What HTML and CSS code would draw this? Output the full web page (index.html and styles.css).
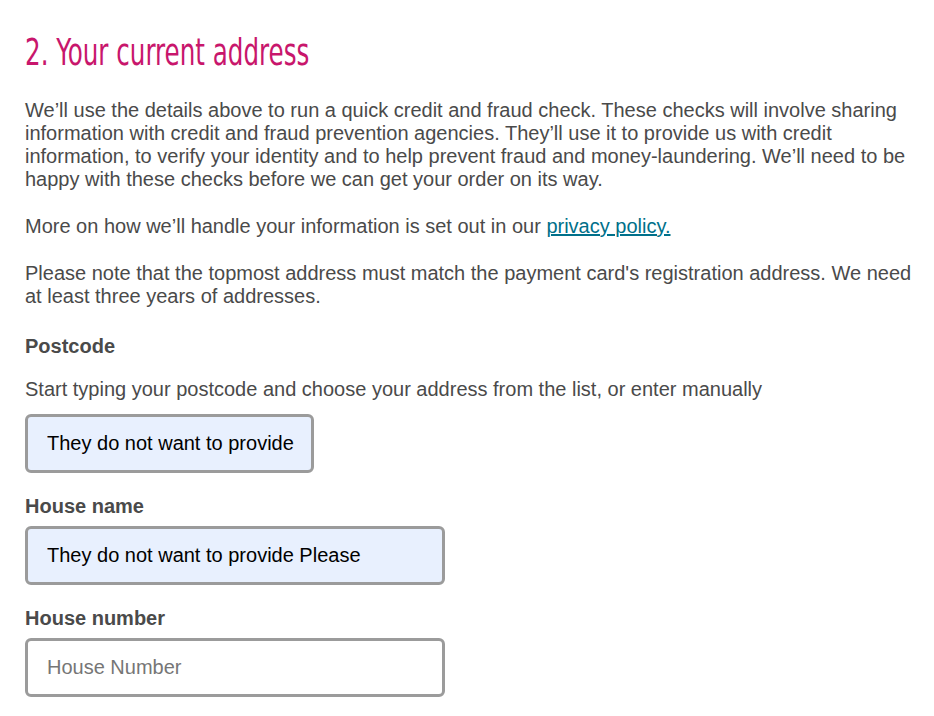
FILE: index.html
```html
<!DOCTYPE html>
<html lang="en">
<head>
<meta charset="utf-8">
<title>Your current address</title>
<link rel="stylesheet" href="styles.css">
</head>
<body>
<main class="section">
  <h2 class="section-title"><span class="section-title__text">2. Your current address</span></h2>
  <p class="copy">We’ll use the details above to run a quick credit and fraud check. These checks will involve sharing information with credit and fraud prevention agencies. They’ll use it to provide us with credit information, to verify your identity and to help prevent fraud and money-laundering. We’ll need to be happy with these checks before we can get your order on its way.</p>
  <p class="copy">More on how we’ll handle your information is set out in our <a class="link" href="#">privacy policy.</a></p>
  <p class="copy">Please note that the topmost address must match the payment card's registration address. We need at least three years of addresses.</p>

  <div class="fields">
    <div class="field">
      <label class="label" for="postcode">Postcode</label>
      <p class="hint">Start typing your postcode and choose your address from the list, or enter manually</p>
      <input class="input input--short input--filled" id="postcode" type="text" value="They do not want to provide">
    </div>

    <div class="field">
      <label class="label" for="housename">House name</label>
      <input class="input input--filled" id="housename" type="text" value="They do not want to provide Please">
    </div>

    <div class="field">
      <label class="label" for="housenumber">House number</label>
      <input class="input" id="housenumber" type="text" placeholder="House Number">
    </div>
  </div>
</main>
</body>
</html>
```

FILE: styles.css
```css
html, body {
  margin: 0;
  padding: 0;
  background: #ffffff;
}

body {
  font-family: "Liberation Sans", Arial, sans-serif;
  color: #4a4a4a;
  font-size: 20px;
  line-height: 23px;
}

.section {
  padding: 30px 16px 0 25px;
}

.section-title {
  margin: 0 0 25px 0;
  font-family: "DejaVu Sans", sans-serif;
  font-stretch: condensed;
  font-weight: normal;
  font-size: 38px;
  line-height: 44px;
  color: #c8166c;
  white-space: nowrap;
}

.section-title__text {
  display: inline-block;
  transform: scaleX(0.72);
  transform-origin: left center;
}

.copy {
  margin: 0 0 24px 0;
}

.link {
  color: #00708a;
  text-decoration: underline;
}

.fields {
  padding-top: 3px;
}

.field {
  margin-bottom: 22px;
}

.label {
  display: block;
  font-weight: bold;
  margin-bottom: 8px;
}

.hint {
  margin: 20px 0 13px 0;
}

.input {
  display: block;
  box-sizing: border-box;
  width: 420px;
  height: 59px;
  padding: 0 8px 0 19px;
  border: 3px solid #9b9b9b;
  border-radius: 6px;
  background: #ffffff;
  font-family: "Liberation Sans", Arial, sans-serif;
  font-size: 20px;
  color: #000000;
  outline: none;
}

.input::placeholder {
  color: #767676;
}

.input--filled {
  background: #e8f0fe;
}

.input--short {
  width: 289px;
}
```
